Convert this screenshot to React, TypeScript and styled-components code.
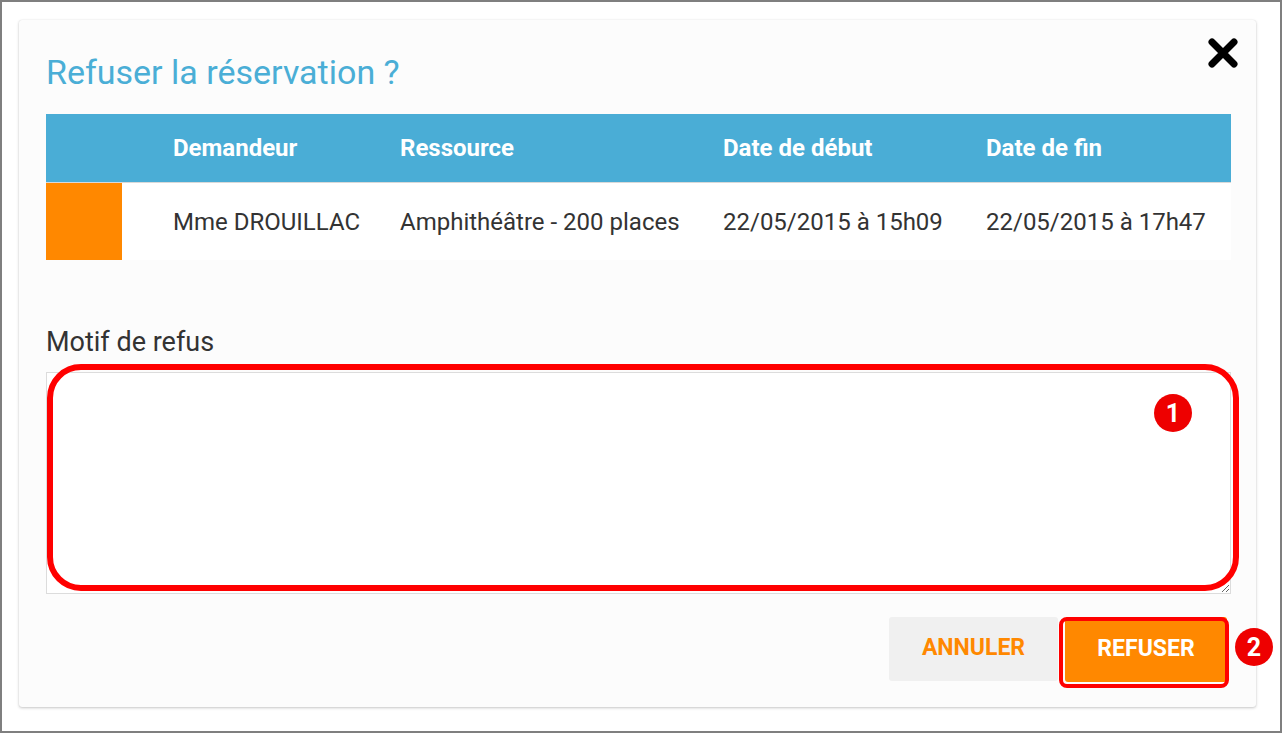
import React from "react";
import styled, { createGlobalStyle } from "styled-components";

const Global = createGlobalStyle`
  html, body { margin: 0; padding: 0; background: #ffffff; }
  body { font-family: Roboto, "Noto Sans", Arial, sans-serif; }
  * { box-sizing: border-box; }
`;

const Frame = styled.div`
  width: 1282px;
  height: 733px;
  border: 2px solid #7f7f7f;
  background: #ffffff;
  padding: 18px 0 0 17px;
`;

const Card = styled.div`
  position: relative;
  width: 1237px;
  height: 687px;
  background: #fcfcfc;
  border-radius: 3px;
  box-shadow: 0 1px 3px rgba(0, 0, 0, 0.22), 0 0 1px rgba(0, 0, 0, 0.12);
  padding: 32px 25px 0 27px;
  display: flex;
  flex-direction: column;
`;

const Title = styled.h2`
  margin: 0 0 22px 0;
  font-size: 34px;
  line-height: 40px;
  font-weight: 400;
  color: #4aaed6;
`;

const Close = styled.button`
  position: absolute;
  top: 17px;
  right: 17px;
  width: 32px;
  height: 32px;
  padding: 0;
  border: none;
  background: transparent;
  display: flex;
  align-items: center;
  justify-content: center;
`;

const Table = styled.div`
  display: grid;
  grid-template-columns: 127px 227px 323px 263px 1fr;
`;

const HeadCell = styled.div`
  height: 69px;
  background: #4aadd6;
  border-bottom: 1px solid #d9d9d9;
  color: #ffffff;
  font-weight: 700;
  font-size: 24px;
  display: flex;
  align-items: center;
  white-space: nowrap;
`;

const Cell = styled.div`
  height: 77px;
  background: #ffffff;
  color: #333333;
  font-size: 24px;
  display: flex;
  align-items: center;
  white-space: nowrap;
`;

const Swatch = styled.div<{ $color: string }>`
  height: 77px;
  background: linear-gradient(
    to right,
    ${(p) => p.$color} 0,
    ${(p) => p.$color} 76px,
    #ffffff 76px
  );
`;

const Label = styled.label`
  display: block;
  margin: 67px 0 15px 0;
  font-size: 27px;
  line-height: 30px;
  color: #333333;
`;

const FieldWrap = styled.div`
  position: relative;
`;

const TextArea = styled.textarea`
  display: block;
  width: 100%;
  height: 222px;
  border: 1px solid #dcdcdc;
  background: #ffffff;
  border-radius: 0;
  margin: 0;
  resize: both;
  outline: none;
  font-family: inherit;
  font-size: 20px;
`;

const Highlight = styled.div<{ $radius: number; $width: number }>`
  position: absolute;
  border: ${(p) => p.$width}px solid #ff0000;
  border-radius: ${(p) => p.$radius}px;
  pointer-events: none;
`;

const AreaHighlight = styled(Highlight)`
  left: 1px;
  top: -8px;
  width: 1192px;
  height: 227px;
`;

const ButtonHighlight = styled(Highlight)`
  left: -6px;
  top: 0px;
  width: 170px;
  height: 71px;
`;

const Badge = styled.span`
  position: absolute;
  width: 38px;
  height: 38px;
  border-radius: 50%;
  background: #ee0000;
  color: #ffffff;
  font-weight: 700;
  font-size: 25px;
  display: flex;
  align-items: center;
  justify-content: center;
  font-family: Roboto, Arial, sans-serif;
`;

const AreaBadge = styled(Badge)`
  left: 1108px;
  top: 22px;
`;

const ButtonBadge = styled(Badge)`
  left: 170px;
  top: 11px;
`;

const Actions = styled.div`
  display: flex;
  justify-content: flex-end;
  gap: 7px;
  margin-top: 23px;
  padding-right: 4px;
`;

const Btn = styled.button<{ $primary?: boolean }>`
  height: ${(p) => (p.$primary ? 65 : 64)}px;
  width: ${(p) => (p.$primary ? 162 : 169)}px;
  border: none;
  border-radius: 3px;
  background: ${(p) => (p.$primary ? "#ff8800" : "#f0f0f0")};
  color: ${(p) => (p.$primary ? "#ffffff" : "#ff8800")};
  font-family: Roboto, Arial, sans-serif;
  font-weight: 700;
  font-size: 23px;
  text-transform: uppercase;
  padding: 0 0 3px 0;
`;

const BtnWrap = styled.div`
  position: relative;
  display: flex;
`;

export default function App() {
  const headers = ["Demandeur", "Ressource", "Date de début", "Date de fin"];
  const row = [
    "Mme DROUILLAC",
    "Amphithéâtre - 200 places",
    "22/05/2015 à 15h09",
    "22/05/2015 à 17h47",
  ];
  return (
    <>
      <Global />
      <Frame>
        <Card>
          <Title>Refuser la réservation ?</Title>
          <Close aria-label="Fermer">
            <svg width="32" height="32" viewBox="0 0 32 32">
              <path
                d="M5 5 L27 27 M27 5 L5 27"
                stroke="#000"
                strokeWidth="7"
                strokeLinecap="round"
              />
            </svg>
          </Close>
          <Table>
            <HeadCell />
            {headers.map((h) => (
              <HeadCell key={h}>{h}</HeadCell>
            ))}
            <Swatch $color="#ff8800" />
            {row.map((c) => (
              <Cell key={c}>{c}</Cell>
            ))}
          </Table>
          <Label htmlFor="motif">Motif de refus</Label>
          <FieldWrap>
            <TextArea id="motif" />
            <AreaHighlight $radius={34} $width={6} />
            <AreaBadge>1</AreaBadge>
          </FieldWrap>
          <Actions>
            <Btn>Annuler</Btn>
            <BtnWrap>
              <Btn $primary>Refuser</Btn>
              <ButtonHighlight $radius={8} $width={4} />
              <ButtonBadge>2</ButtonBadge>
            </BtnWrap>
          </Actions>
        </Card>
      </Frame>
    </>
  );
}
